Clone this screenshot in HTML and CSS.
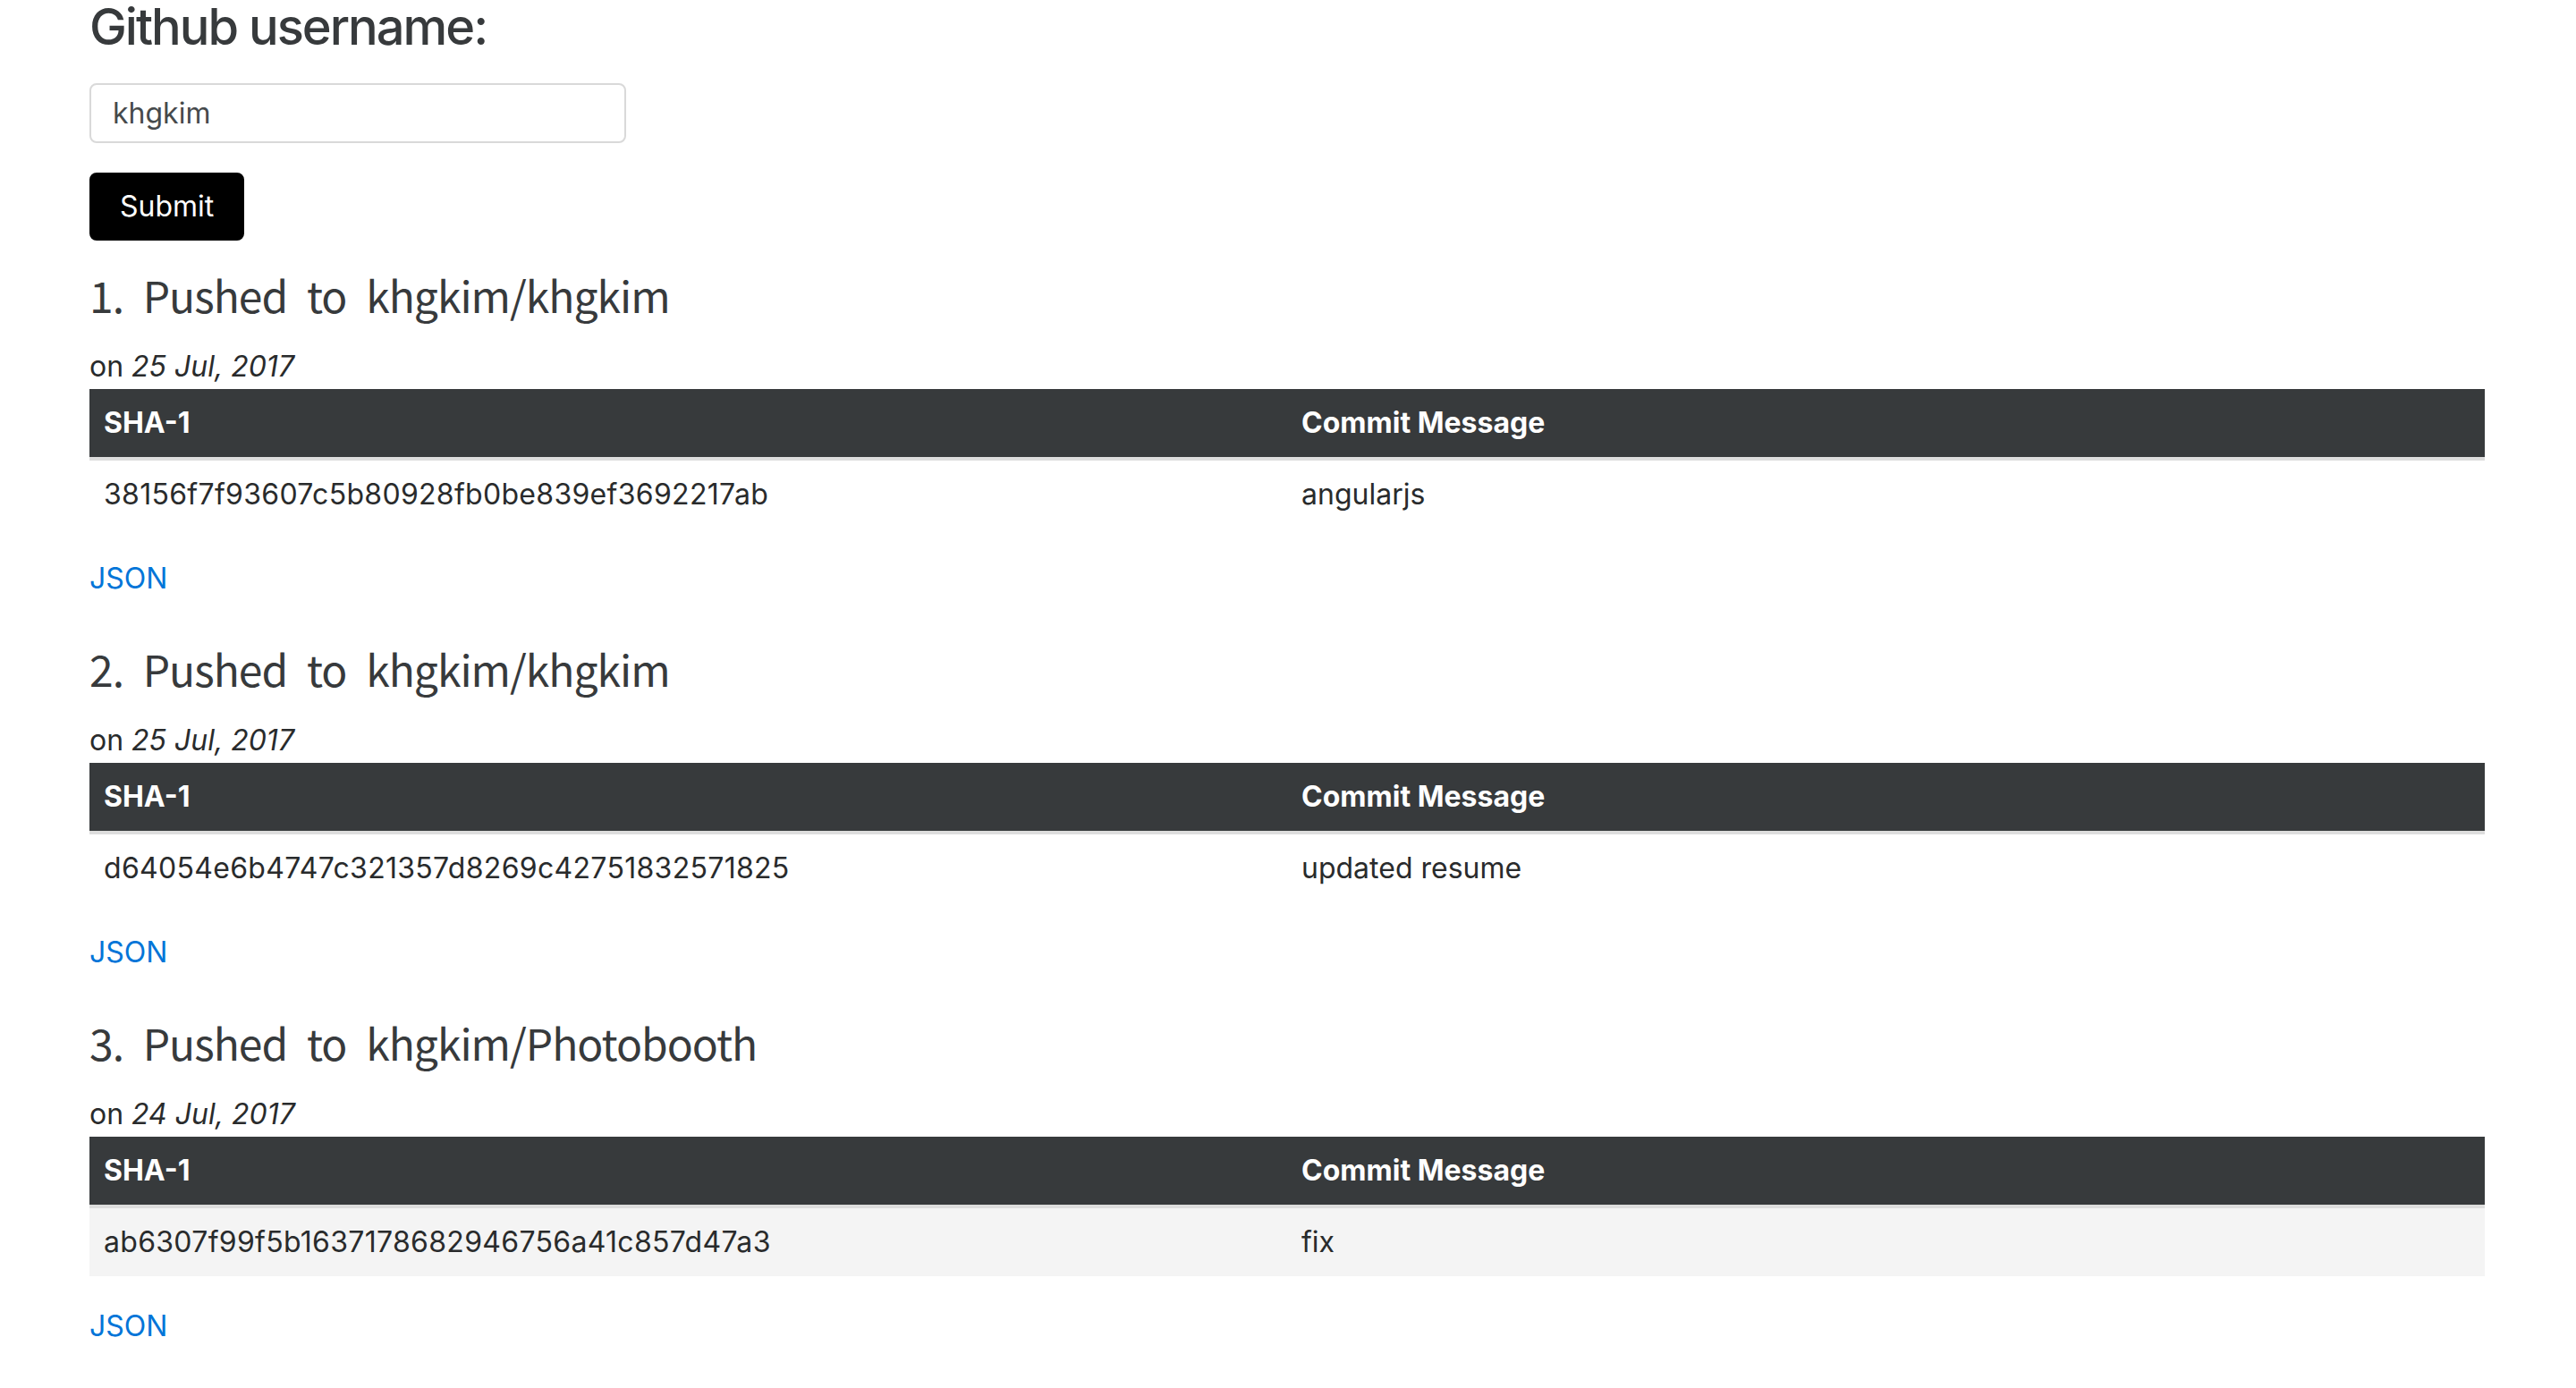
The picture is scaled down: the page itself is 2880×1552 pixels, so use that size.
FILE: index.html
```html
<!DOCTYPE html>
<html lang="en">
<head>
<meta charset="utf-8">
<title>Github events</title>
<link rel="stylesheet" href="styles.css">
</head>
<body>
<div class="page">
  <form class="search">
    <h3 class="search-title">Github username:</h3>
    <input class="search-input" type="text" value="khgkim">
    <button class="btn-submit" type="button">Submit</button>
  </form>

  <section class="event">
    <h4 class="event-title">1. Pushed to khgkim/khgkim</h4>
    <div class="event-date">on <em>25 Jul, 2017</em></div>
    <table class="commits">
      <thead><tr><th>SHA-1</th><th>Commit Message</th></tr></thead>
      <tbody><tr><td class="sha">38156f7f93607c5b80928fb0be839ef3692217ab</td><td>angularjs</td></tr></tbody>
    </table>
    <div class="event-link"><a href="#">JSON</a></div>
  </section>

  <section class="event">
    <h4 class="event-title">2. Pushed to khgkim/khgkim</h4>
    <div class="event-date">on <em>25 Jul, 2017</em></div>
    <table class="commits">
      <thead><tr><th>SHA-1</th><th>Commit Message</th></tr></thead>
      <tbody><tr><td class="sha">d64054e6b4747c321357d8269c42751832571825</td><td>updated resume</td></tr></tbody>
    </table>
    <div class="event-link"><a href="#">JSON</a></div>
  </section>

  <section class="event">
    <h4 class="event-title">3. Pushed to khgkim/Photobooth</h4>
    <div class="event-date">on <em>24 Jul, 2017</em></div>
    <table class="commits">
      <thead><tr><th>SHA-1</th><th>Commit Message</th></tr></thead>
      <tbody><tr class="is-hover"><td class="sha">ab6307f99f5b1637178682946756a41c857d47a3</td><td>fix</td></tr></tbody>
    </table>
    <div class="event-link"><a href="#">JSON</a></div>
  </section>
</div>
</body>
</html>
```

FILE: styles.css
```css
html, body {
  margin: 0;
  padding: 0;
  background: #ffffff;
}

body {
  font-family: Inter, "Liberation Sans", sans-serif;
  font-size: 32px;
  line-height: 48px;
  color: #292b2c;
}

.page {
  padding: 0 102px 0 100px;
}

.search {
  display: flex;
  flex-direction: column;
  align-items: flex-start;
  margin: 0;
}

.search-title {
  margin: 0 0 31px 0;
  font-size: 56px;
  line-height: 61.6px;
  font-weight: 500;
  letter-spacing: -2px;
  color: #373a3c;
}

.search-input {
  box-sizing: border-box;
  width: 600px;
  height: 67px;
  margin: 0 0 33px 0;
  padding: 0 24px;
  border: 2px solid #d9d9d9;
  border-radius: 8px;
  font-family: Inter, "Liberation Sans", sans-serif;
  font-size: 32px;
  color: #464a4c;
  background: #fff;
  outline: none;
}

.btn-submit {
  box-sizing: border-box;
  height: 76px;
  padding: 0 32px;
  border: 2px solid #000;
  border-radius: 8px;
  background: #000;
  color: #fff;
  font-family: Inter, "Liberation Sans", sans-serif;
  font-size: 32px;
  line-height: 40px;
  cursor: pointer;
}

.search + .event {
  margin-top: 34px;
}

.event {
  margin-bottom: 50px;
}

.event-title {
  margin: 0 0 30.6px 0;
  font-family: "Noto Sans CJK KR", "Noto Sans", sans-serif;
  font-size: 48px;
  line-height: 52.8px;
  font-weight: 400;
  letter-spacing: -1px;
  word-spacing: 12px;
  color: #373a3c;
}

.event-date {
  line-height: 48px;
  height: 48.6px;
  color: #292b2c;
}

.event-date em {
  font-style: italic;
}

.commits {
  width: 100%;
  table-layout: fixed;
  border-collapse: separate;
  border-spacing: 0;
  margin-bottom: 32px;
}

.commits th,
.commits td {
  width: 50%;
  padding: 14px 16px;
  text-align: left;
  vertical-align: middle;
  line-height: 48px;
}

.commits th {
  background: #373a3c;
  color: #ffffff;
  font-weight: 700;
  border-bottom: 4px solid #dddddd;
}

.commits td {
  color: #292b2c;
}

.commits td.sha {
  letter-spacing: 0.3px;
}

.commits tr.is-hover td {
  background: #f4f4f4;
}

.event-link {
  line-height: 48px;
}

.event-link a {
  color: #0275d8;
  text-decoration: none;
}
```
